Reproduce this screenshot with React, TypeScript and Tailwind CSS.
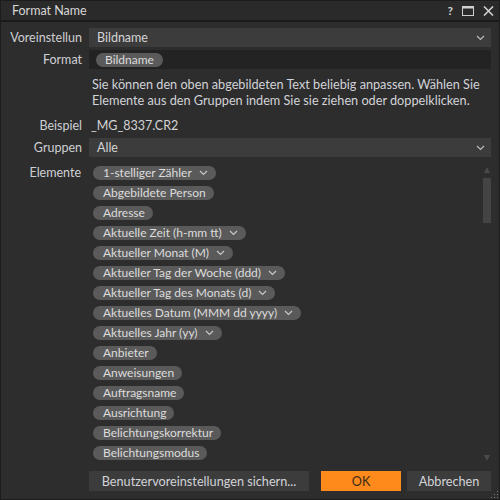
import React from "react";

const items: { t: string; c?: boolean }[] = [
  { t: "1-stelliger Zähler", c: true },
  { t: "Abgebildete Person" },
  { t: "Adresse" },
  { t: "Aktuelle Zeit (h-mm tt)", c: true },
  { t: "Aktueller Monat (M)", c: true },
  { t: "Aktueller Tag der Woche (ddd)", c: true },
  { t: "Aktueller Tag des Monats (d)", c: true },
  { t: "Aktuelles Datum (MMM dd yyyy)", c: true },
  { t: "Aktuelles Jahr (yy)", c: true },
  { t: "Anbieter" },
  { t: "Anweisungen" },
  { t: "Auftragsname" },
  { t: "Ausrichtung" },
  { t: "Belichtungskorrektur" },
  { t: "Belichtungsmodus" },
];

function Chevron({ className = "" }: { className?: string }) {
  return (
    <svg width="9" height="6" viewBox="0 0 9 6" className={className}>
      <path d="M1 1 L4.5 4.5 L8 1" fill="none" stroke="currentColor" strokeWidth="1.2" />
    </svg>
  );
}

function Combo({ value }: { value: string }) {
  return (
    <div className="h-[19px] bg-[#3c3c3c] flex items-center pl-2 pr-[6px] text-[#d4d4d4]">
      <span className="flex-1 leading-[14px] text-[12.5px]">{value}</span>
      <Chevron className="text-[#bdbdbd]" />
    </div>
  );
}

export default function App() {
  return (
    <div
      className="relative w-[500px] h-[500px] bg-[#2d2d2d] border border-[#1c1c1c] flex flex-col text-[12.5px] leading-[14px] text-[#cfd0d4] overflow-hidden"
      style={{ fontFamily: 'Lato, "Liberation Sans", sans-serif' }}
    >
      {/* title bar */}
      <div className="h-[19px] shrink-0 bg-[#2a2a2a] flex items-center pl-[11px] pr-[5px] border-b-2 border-[#1a1a1a] box-content">
        <span className="flex-1 text-[#d8d8d8]">Format Name</span>
        <div className="flex items-center gap-[9px] text-[#d0d0d0]">
          <span className="font-bold text-[12px] leading-none">?</span>
          <svg width="12" height="10" viewBox="0 0 12 10">
            <rect x="0.5" y="0.5" width="11" height="9" fill="none" stroke="currentColor" strokeWidth="1" />
            <rect x="0.5" y="0.5" width="11" height="2" fill="currentColor" />
          </svg>
          <svg width="11" height="10" viewBox="0 0 11 10">
            <path d="M1 0.5 L10 9.5 M10 0.5 L1 9.5" stroke="currentColor" strokeWidth="1.6" />
          </svg>
        </div>
      </div>

      <div className="flex-1 flex flex-col pr-[8px] pt-[6px] min-h-0">
        <div className="grid grid-cols-[81px_1fr] gap-x-[7px] items-center">
          <div className="text-right">Voreinstellun</div>
          <Combo value="Bildname" />
        </div>

        <div className="grid grid-cols-[81px_1fr] gap-x-[7px] items-center mt-[3px]">
          <div className="text-right">Format</div>
          <div className="h-[19px] bg-[#232323] flex items-center pl-[7px]">
            <span className="h-[14px] leading-[14px] rounded-full bg-[#5a5a5a] px-[9px] text-[12px] text-[#dcdcdc]">
              Bildname
            </span>
          </div>
        </div>

        <div className="grid grid-cols-[81px_1fr] gap-x-[10px] mt-[7px]">
          <div />
          <div className="leading-[16px] text-[#d2d3d8] text-[12.7px]">
            Sie können den oben abgebildeten Text beliebig anpassen. Wählen Sie Elemente aus den Gruppen indem Sie sie ziehen oder doppelklicken.
          </div>
        </div>

        <div className="grid grid-cols-[81px_1fr] gap-x-[9px] items-center mt-[11px]">
          <div className="text-right">Beispiel</div>
          <div className="text-[#d4d4d4]">_MG_8337.CR2</div>
        </div>

        <div className="grid grid-cols-[81px_1fr] gap-x-[7px] items-center mt-[5px]">
          <div className="text-right">Gruppen</div>
          <Combo value="Alle" />
        </div>

        <div className="grid grid-cols-[81px_1fr] gap-x-[11px] mt-[9px] h-[296px] shrink-0">
          <div className="text-right leading-[14px] pr-[1px]">Elemente</div>
          <div className="flex min-h-0">
            <div className="flex-1 flex flex-col items-start gap-[6px]">
              {items.map((it) => (
                <span
                  key={it.t}
                  className="h-[14px] leading-[14px] rounded-full bg-[#5a5a5a] pl-[10px] pr-[8px] text-[12px] text-[#dcdcdc] flex items-center gap-[7px] whitespace-nowrap"
                >
                  {it.t}
                  {it.c && <Chevron className="text-[#c8c8c8]" />}
                </span>
              ))}
            </div>
            <div className="w-[10px] flex flex-col items-center mr-[-1px]">
              <svg width="8" height="8" viewBox="0 0 8 8">
                <path d="M4 1 L7 7 L1 7 Z" fill="#4a4a4a" />
              </svg>
              <div className="w-[8px] h-[45px] bg-[#444444] mt-[4px]" />
              <div className="flex-1" />
              <svg width="8" height="8" viewBox="0 0 8 8" className="mb-[0px]">
                <path d="M1 1 L7 1 L4 7 Z" fill="#4a4a4a" />
              </svg>
            </div>
          </div>
        </div>

        <div className="flex items-center mt-[9px] pl-[88px]">
          <button className="w-[220px] h-[20px] bg-[#3c3c3c] text-[#d2d3d8] text-[12.7px]">
            Benutzervoreinstellungen sichern...
          </button>
          <button className="w-[80px] h-[20px] bg-[#ff8a1c] text-[#3a2a1a] ml-[12px] text-[12.7px]">OK</button>
          <button className="w-[84px] h-[20px] bg-[#3c3c3c] text-[#d2d3d8] ml-[6px] text-[12.7px]">Abbrechen</button>
        </div>
      </div>
      <svg width="8" height="8" viewBox="0 0 8 8" className="absolute left-[490px] top-[490px]">
        <rect x="6" y="0" width="1" height="1" fill="#777" />
        <rect x="3" y="3" width="1" height="1" fill="#777" />
        <rect x="6" y="3" width="1" height="1" fill="#777" />
        <rect x="0" y="6" width="1" height="1" fill="#777" />
        <rect x="3" y="6" width="1" height="1" fill="#777" />
        <rect x="6" y="6" width="1" height="1" fill="#777" />
      </svg>
    </div>
  );
}
